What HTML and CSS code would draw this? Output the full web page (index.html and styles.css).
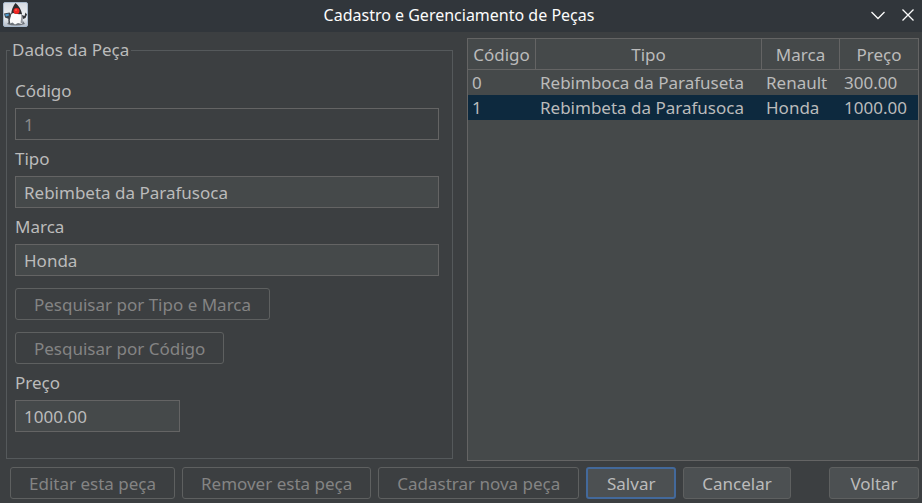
FILE: index.html
```html
<!DOCTYPE html>
<html lang="pt-BR">
<head>
<meta charset="utf-8">
<title>Cadastro e Gerenciamento de Peças</title>
<link rel="stylesheet" href="styles.css">
</head>
<body>
<header class="titlebar">
  <svg class="app-icon" viewBox="0 0 25 25" aria-hidden="true">
    <defs><linearGradient id="tile" x1="0" y1="0" x2="0" y2="1"><stop offset="0" stop-color="#d5dae2"/><stop offset="0.6" stop-color="#f2f4f6"/><stop offset="1" stop-color="#b4bdc9"/></linearGradient></defs>
    <rect x="0.5" y="0.5" width="24" height="24" rx="1.5" fill="url(#tile)" stroke="#a9bacd"/>
    <path d="M1 11.500L6.500 10.500L9 13L6 17L2 15.500Z" fill="#3c434b"/>
    <path d="M2 12.500L5.500 11.500L6 13.500L3 14.500Z" fill="#4c9bd0"/>
    <path d="M4 22Q12 25 22 22L20 19H7Z" fill="#6c7279"/>
    <path d="M8.500 10Q6.500 17 7 21.500L9.500 20.500L12 22.500L15 21L19 22Q21 16 18 10Z" fill="#fbfbfb"/>
    <path d="M18 10Q20.500 14 19.500 22L17.500 20.500Q19 15 18 10Z" fill="#8f949b"/>
    <path d="M12.500 1Q9 5 8 12.500L10 11Q13 12.500 19 12Q17.500 5 12.500 1Z" fill="#2c2c2f"/>
    <path d="M19 13L21.500 14L22.500 10.500L24 12.500L22.500 16L20 17Z" fill="#33363b"/>
    <path d="M7.500 12L6 18L6.500 21.500" fill="none" stroke="#494c51" stroke-width="1.5"/>
    <circle cx="13.500" cy="9" r="3" fill="#ef2420"/>
    <circle cx="13" cy="8" r="1" fill="#ff5a4e"/>
  </svg>
  <h1 class="title">Cadastro e Gerenciamento de Peças</h1>
  <div class="window-controls">
    <button class="window-button" type="button" aria-label="Minimizar"><svg viewBox="0 0 14 14"><path d="M0.500 4L7 10.500L13.500 4"/></svg></button>
    <button class="window-button" type="button" aria-label="Fechar"><svg viewBox="0 0 14 14"><path d="M1.500 1.500L12.500 12.500M12.500 1.500L1.500 12.500"/></svg></button>
  </div>
</header>
<main class="content">
  <fieldset class="part-form">
    <legend>Dados da Peça</legend>
    <label for="codigo">Código</label>
    <input id="codigo" type="text" value="1" disabled>
    <label for="tipo">Tipo</label>
    <input id="tipo" type="text" value="Rebimbeta da Parafusoca">
    <label for="marca">Marca</label>
    <input id="marca" type="text" value="Honda">
    <div class="search-actions">
      <button class="button" type="button" disabled>Pesquisar por Tipo e Marca</button>
      <button class="button" type="button" disabled>Pesquisar por Código</button>
    </div>
    <label for="preco">Preço</label>
    <input id="preco" class="short" type="text" value="1000.00">
  </fieldset>
  <div class="table-pane">
    <table>
      <colgroup><col class="col-code"><col><col class="col-brand"><col class="col-price"></colgroup>
      <thead><tr><th>Código</th><th>Tipo</th><th>Marca</th><th>Preço</th></tr></thead>
      <tbody>
        <tr><td>0</td><td>Rebimboca da Parafuseta</td><td>Renault</td><td>300.00</td></tr>
        <tr class="selected"><td>1</td><td>Rebimbeta da Parafusoca</td><td>Honda</td><td>1000.00</td></tr>
      </tbody>
    </table>
  </div>
</main>
<footer class="actions">
  <button class="button" type="button" disabled>Editar esta peça</button>
  <button class="button" type="button" disabled>Remover esta peça</button>
  <button class="button" type="button" disabled>Cadastrar nova peça</button>
  <button class="button primary" type="button">Salvar</button>
  <button class="button" type="button">Cancelar</button>
  <button class="button last" type="button">Voltar</button>
</footer>
</body>
</html>
```
FILE: styles.css
```css
* { box-sizing: border-box; }

body {
  margin: 0;
  min-height: 100vh;
  display: flex;
  flex-direction: column;
  background: #3c3f41;
  color: #bbbbbb;
  font: 17px/24px "Noto Sans", sans-serif;
}

button, input { font: inherit; color: inherit; }

.titlebar {
  display: grid;
  grid-template-columns: 1fr auto 1fr;
  align-items: center;
  height: 32px;
  padding: 0 7px 3px 3px;
  background: #31363b;
  color: #fcfcfc;
}

.app-icon { width: 25px; height: 25px; }

.title {
  margin: 0;
  font-size: 16px;
  font-weight: 400;
}

.window-controls {
  display: flex;
  justify-content: flex-end;
  gap: 16px;
}

.window-button {
  display: flex;
  padding: 0;
  border: 0;
  background: none;
}

.window-button svg {
  width: 14px;
  height: 14px;
  fill: none;
  stroke: #fcfcfc;
  stroke-width: 1.3;
}

.content {
  flex: 1;
  display: grid;
  grid-template-columns: 447fr 452fr;
  gap: 14px;
  padding: 6px 3px 0 6px;
}

.part-form {
  display: flex;
  flex-direction: column;
  min-width: 0;
  margin: 0 0 2px;
  padding: 10px 13px 26px 8px;
  border: 1px solid #55595b;
}

.part-form legend {
  margin-left: -5px;
  padding: 0 2px;
}

.part-form label {
  margin: 7px 0 5px;
}

.part-form input {
  width: 100%;
  height: 32px;
  padding: 0 8px;
  border: 1px solid #646464;
  border-radius: 0;
  outline: 0;
  background: #45494a;
}

.part-form input:disabled {
  background: #3c3f41;
  color: #8a8a8a;
}

.part-form .short { width: 165px; }

.search-actions {
  display: flex;
  flex-direction: column;
  align-items: flex-start;
  gap: 12px;
  margin-top: 12px;
}

.button {
  height: 32px;
  min-width: 90px;
  padding: 2px 18px 0;
  border: 1px solid #5e6060;
  border-radius: 3px;
  background: #4c5052;
  white-space: nowrap;
}

.button:disabled {
  background: #3c3f41;
  color: #848484;
}

.primary {
  border: 2px solid #43699b;
}

.table-pane {
  border: 1px solid #646464;
  background: #45494a;
}

table {
  width: 100%;
  table-layout: fixed;
  border-collapse: separate;
  border-spacing: 0;
}

.col-code { width: 68px; }
.col-brand, .col-price { width: 78px; }

th {
  height: 31px;
  padding: 2px 0 0;
  border-right: 1px solid #646464;
  border-bottom: 1px solid #646464;
  font-weight: 400;
}

th:last-child { border-right: 0; }

td {
  height: 25px;
  padding: 0 4px;
  white-space: nowrap;
}

.selected { background: #0d293e; }

.actions {
  display: flex;
  gap: 7px;
  padding: 6px 3px 4px 10px;
}

.last { margin-left: auto; }
```
